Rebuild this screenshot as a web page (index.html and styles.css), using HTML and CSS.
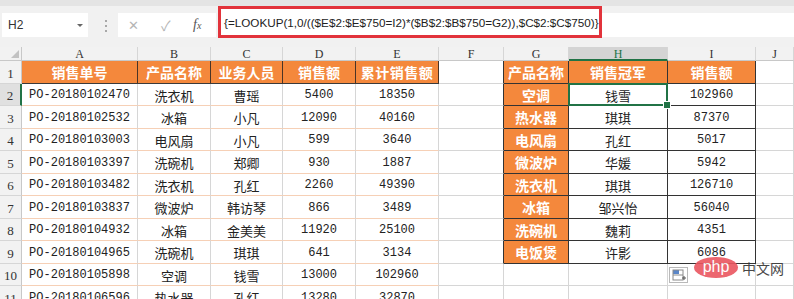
FILE: index.html
```html
<!DOCTYPE html>
<html lang="zh-CN">
<head>
<meta charset="utf-8">
<title>Excel</title>
<link rel="stylesheet" href="styles.css">
</head>
<body>
<div class="app">
  <div class="fbar">
    <div class="namebox"><span class="ref">H2</span><span class="caret"></span></div>
    <div class="grip"><i></i><i></i><i></i></div>
    <div class="btns">
      <span class="bx">✕</span>
      <span class="bok">✓</span>
      <span class="bfx">f<span class="sx">x</span></span>
    </div>
    <div class="fmark">{=LOOKUP(1,0/(($E$2:$E$750=I2)*($B$2:$B$750=G2)),$C$2:$C$750)}</div>
    <div class="frest"></div>
  </div>

  <div class="sheet">
    <div class="corner"><span class="tri"></span></div>
    <div class="ch">A</div><div class="ch">B</div><div class="ch">C</div><div class="ch">D</div><div class="ch">E</div><div class="ch">F</div><div class="ch">G</div><div class="ch selc">H</div><div class="ch">I</div><div class="ch">J</div>

    <div class="rh">1</div>
    <div class="hd">销售单号</div><div class="hd">产品名称</div><div class="hd">业务人员</div><div class="hd">销售额</div><div class="hd hdl">累计销售额</div>
    <div class="c fr"></div><div class="g">产品名称</div><div class="g">销售冠军</div><div class="g">销售额</div><div class="c"></div>

    <div class="rh selr">2</div>
    <div class="d">PO-20180102470</div><div class="d zh">洗衣机</div><div class="d zh">曹瑶</div><div class="d">5400</div><div class="d">18350</div>
    <div class="c fr"></div><div class="g">空调</div><div class="t zh sel">钱雪</div><div class="t">102960</div><div class="c"></div>

    <div class="rh">3</div>
    <div class="d">PO-20180102532</div><div class="d zh">冰箱</div><div class="d zh">小凡</div><div class="d">12090</div><div class="d">40160</div>
    <div class="c fr"></div><div class="g">热水器</div><div class="t zh">琪琪</div><div class="t">87370</div><div class="c"></div>

    <div class="rh">4</div>
    <div class="d">PO-20180103003</div><div class="d zh">电风扇</div><div class="d zh">小凡</div><div class="d">599</div><div class="d">3640</div>
    <div class="c fr"></div><div class="g">电风扇</div><div class="t zh">孔红</div><div class="t">5017</div><div class="c"></div>

    <div class="rh">5</div>
    <div class="d">PO-20180103397</div><div class="d zh">洗碗机</div><div class="d zh">郑卿</div><div class="d">930</div><div class="d">1887</div>
    <div class="c fr"></div><div class="g">微波炉</div><div class="t zh">华媛</div><div class="t">5942</div><div class="c"></div>

    <div class="rh">6</div>
    <div class="d">PO-20180103482</div><div class="d zh">洗衣机</div><div class="d zh">孔红</div><div class="d">2260</div><div class="d">49390</div>
    <div class="c fr"></div><div class="g">洗衣机</div><div class="t zh">琪琪</div><div class="t">126710</div><div class="c"></div>

    <div class="rh">7</div>
    <div class="d">PO-20180103837</div><div class="d zh">微波炉</div><div class="d zh">韩访琴</div><div class="d">866</div><div class="d">3489</div>
    <div class="c fr"></div><div class="g">冰箱</div><div class="t zh">邹兴怡</div><div class="t">56040</div><div class="c"></div>

    <div class="rh">8</div>
    <div class="d">PO-20180104932</div><div class="d zh">冰箱</div><div class="d zh">金美美</div><div class="d">11920</div><div class="d">25100</div>
    <div class="c fr"></div><div class="g">洗碗机</div><div class="t zh">魏莉</div><div class="t">4351</div><div class="c"></div>

    <div class="rh">9</div>
    <div class="d">PO-20180104965</div><div class="d zh">洗碗机</div><div class="d zh">琪琪</div><div class="d">641</div><div class="d">3134</div>
    <div class="c fr"></div><div class="g">电饭煲</div><div class="t zh">许影</div><div class="t">6086</div><div class="c"></div>

    <div class="rh">10</div>
    <div class="d">PO-20180105898</div><div class="d zh">空调</div><div class="d zh">钱雪</div><div class="d">13000</div><div class="d">102960</div>
    <div class="c"></div><div class="c"></div><div class="c"></div><div class="c"></div><div class="c"></div>

    <div class="rh">11</div>
    <div class="d">PO-20180106596</div><div class="d zh">热水器</div><div class="d zh">孔红</div><div class="d">13280</div><div class="d">32870</div>
    <div class="c"></div><div class="c"></div><div class="c"></div><div class="c"></div><div class="c"></div>
  </div>

  <div class="paste">
    <svg width="19" height="16" viewBox="0 0 19 16">
      <rect x="0.5" y="0.5" width="18" height="15" fill="#fff" stroke="#b9b9b9"/>
      <rect x="4" y="3" width="6" height="4" fill="#5a86c8"/>
      <rect x="4" y="3" width="10" height="10" fill="none" stroke="#8a8a8a" stroke-width="1"/>
      <line x1="4" y1="8" x2="14" y2="8" stroke="#8a8a8a"/>
      <line x1="13" y1="11" x2="17" y2="11" stroke="#555"/>
      <line x1="15" y1="9" x2="15" y2="13" stroke="#555"/>
    </svg>
  </div>

  <div class="logo"><span class="php">php</span><span class="cn">中文网</span></div>
</div>
</body>
</html>
```

FILE: styles.css
```css
* { box-sizing: border-box; margin: 0; padding: 0; }
html, body { width: 794px; height: 299px; overflow: hidden; background: #fff; }
body { font-family: "Liberation Sans", "Noto Sans CJK SC", sans-serif; color: #222; }

.app { position: relative; width: 794px; height: 299px; overflow: hidden; }

/* formula bar */
.fbar {
  display: flex;
  align-items: flex-start;
  height: 47px;
  background: #f1f1f1;
  border-top: 6px solid #e4e4e4;
}
.namebox {
  display: flex;
  align-items: center;
  justify-content: space-between;
  width: 86px;
  height: 24px;
  margin: 7px 0 0 2px;
  padding: 0 5px 0 6px;
  background: #fff;
  font-size: 12px;
  color: #333;
}
.caret {
  width: 0; height: 0;
  border-left: 3px solid transparent;
  border-right: 3px solid transparent;
  border-top: 3px solid #666;
}
.grip {
  display: flex;
  flex-direction: column;
  gap: 3px;
  margin: 14px 0 0 17px;
  width: 2px;
}
.grip i { display: block; width: 2px; height: 2px; background: #a8a8a8; }
.btns {
  display: flex;
  align-items: center;
  width: 98px;
  height: 24px;
  margin: 7px 0 0 11px;
  padding-left: 10px;
  background: #fff;
  color: #b5b5b5;
}
.bx { font-size: 13px; width: 33px; }
.bok { font-size: 14px; width: 32px; }
.bfx { font-family: "Liberation Serif", serif; font-style: italic; font-size: 14px; color: #555; }
.sx { font-size: 10px; }

.fmark {
  width: 384px;
  height: 32px;
  margin: 0 0 0 2px;
  border: 3px solid #e2333b;
  background: #fff;
  padding-left: 3px;
  display: flex;
  align-items: center;
  font-family: "Liberation Sans", sans-serif;
  font-size: 11.7px;
  color: #222;
  white-space: nowrap;
}
.frest { flex: 1; height: 24px; margin-top: 7px; background: #fff; }

/* sheet grid */
.sheet {
  display: grid;
  grid-template-columns: 22px 116px 73px 72px 73px 83px 65px 65px 99px 88px 38px;
  grid-template-rows: 14px 23px 22px 23px 22px 23px 22px 23px 22px 23px 22px 23px;
}
.sheet > div {
  display: flex;
  align-items: center;
  justify-content: center;
  border-right: 1px solid #d6d6d6;
  border-bottom: 1px solid #d6d6d6;
  white-space: nowrap;
  overflow: hidden;
}

.corner { background: #f2f2f2; position: relative; border-right-color: #c8c8c8 !important; border-bottom-color: #c8c8c8 !important; }
.tri {
  position: absolute; right: 2px; bottom: 2px;
  width: 0; height: 0;
  border-left: 8px solid transparent;
  border-bottom: 8px solid #c2c2c2;
}
.ch {
  background: #f2f2f2;
  font-family: "Liberation Serif", serif;
  font-size: 12px;
  color: #333;
  padding-top: 2px;
  border-bottom-color: #c8c8c8 !important;
}
.ch.selc { background: #d4d4d4; color: #217346; border-bottom: 2px solid #217346 !important; }
.rh {
  background: #f2f2f2;
  font-family: "Liberation Serif", serif;
  font-size: 13px;
  color: #333;
  border-right-color: #c8c8c8 !important;
  padding-top: 3px;
}
.rh.selr { background: #e0e0e0; border-right: 2px solid #217346 !important; }

.hd {
  background: #f4883c;
  color: #fff;
  font-family: "Noto Sans CJK SC", sans-serif;
  font-weight: 700;
  font-size: 14px;
  border-right-color: #4a3426 !important;
  border-bottom-color: #3a3a3a !important;
}
.hd.hdl { letter-spacing: 0.5px; }

.d {
  font-family: "Liberation Mono", "Noto Sans CJK SC", monospace;
  font-size: 12px;
  color: #222;
  padding-top: 1px;
  border-bottom-color: #f6d0b6 !important;
}
.zh { font-family: "Noto Sans CJK SC", sans-serif; font-size: 13px; }

.c { background: #fff; }
.fr { border-right-color: #333 !important; }

.g {
  background: #f4883c;
  color: #fff;
  font-family: "Noto Sans CJK SC", sans-serif;
  font-weight: 700;
  font-size: 14px;
  border-right-color: #333 !important;
  border-bottom-color: #333 !important;
}
.t {
  font-family: "Liberation Mono", "Noto Sans CJK SC", monospace;
  font-size: 12px;
  color: #222;
  padding-top: 1px;
  border-right-color: #333 !important;
  border-bottom-color: #333 !important;
}
.t.zh { font-family: "Noto Sans CJK SC", sans-serif; font-size: 13px; }

.sel { position: relative; overflow: visible !important; }
.sel::before {
  content: "";
  position: absolute;
  left: -1px; top: -1px; right: -1px; bottom: -1px;
  border: 2px solid #217346;
}
.sel::after {
  content: "";
  position: absolute;
  right: -4px; bottom: -4px;
  width: 6px; height: 6px;
  background: #217346;
  border: 1px solid #fff;
  z-index: 2;
}

/* overlays */
.paste { position: absolute; left: 669px; top: 267px; width: 19px; height: 16px; }
.paste svg { display: block; }
.logo {
  position: absolute;
  left: 694px; top: 257px;
  display: flex;
  align-items: center;
  gap: 4px;
  opacity: 0.9;
}
.php {
  display: flex;
  align-items: center;
  justify-content: center;
  width: 44px;
  height: 21px;
  border-radius: 50%;
  background: #ea5660;
  color: #fff;
  font-family: "Liberation Sans", sans-serif;
  font-size: 16px;
  line-height: 1;
  padding-bottom: 2px;
}
.cn {
  font-family: "Noto Sans CJK SC", sans-serif;
  font-size: 14px;
  color: #333;
}
```
